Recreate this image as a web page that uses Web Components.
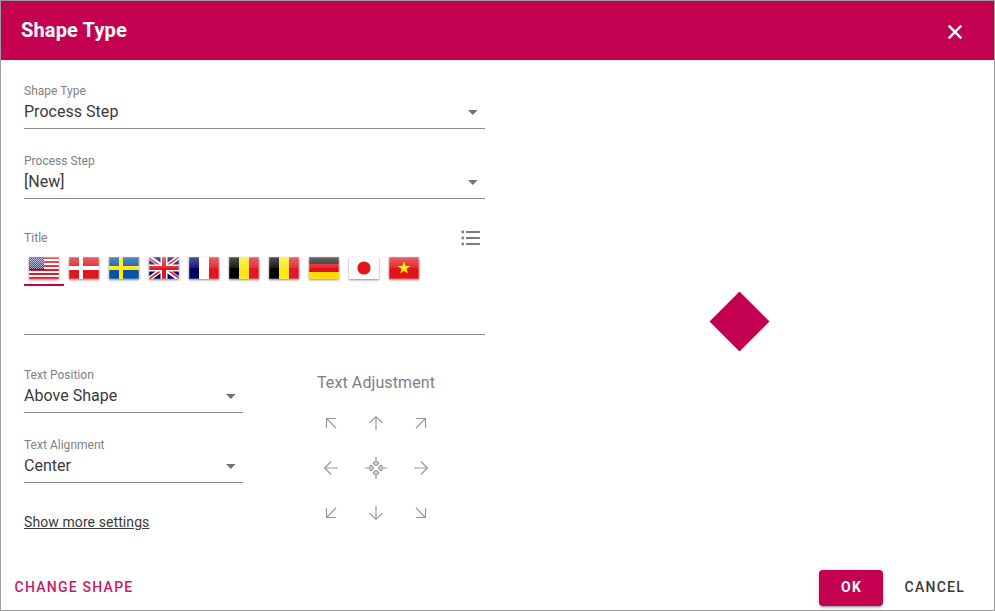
<!DOCTYPE html>
<html lang="en"><head><meta charset="utf-8"><title>Shape Type</title>
<style>
html,body{margin:0;height:100%;overflow:hidden;background:#fff;font-family:Roboto,sans-serif;--accent:#c40050}
</style></head><body>
<shape-dialog></shape-dialog>
<script>
const define=(name,html,setup)=>customElements.define(name,class extends HTMLElement{
  constructor(){super();this.attachShadow({mode:'open'})}
  connectedCallback(){this.shadowRoot.innerHTML=typeof html==='function'?html(this):html;if(setup)setup(this)}
});

define('select-field',`<style>
:host{display:flex;flex-direction:column;box-sizing:border-box;height:45px;border-bottom:1px solid #8c8c8c}
.label{font-size:12px;line-height:14px;color:#808080;letter-spacing:.02px}
.row{display:flex;justify-content:space-between;align-items:center;height:28px;font-size:16px;line-height:28px;color:#3a3a3a;letter-spacing:.03px}
svg{margin:0 7px 0 0}
</style><div class="label"><slot name="label"></slot></div>
<div class="row"><span><slot></slot></span><svg width="10" height="5"><path d="M0 0H9.6L4.8 5Z" fill="#737373"/></svg></div>`);

const flagArt={
us:'<path fill="#fff" d="M0 0h30v22H0z"/><path stroke="#e0162b" stroke-width="2" d="M0 1h30M0 5h30M0 9h30M0 13h30M0 17h30M0 21h30"/><path fill="#1c2a85" d="M0 0h15v13H0z"/><path d="M1 1.5h14M1 3.5h14M1 5.5h14M1 7.5h14M1 9.5h14M1 11.5h14M2 2.5h13M2 4.5h13M2 6.5h13M2 8.5h13M2 10.5h13" stroke="#fff" stroke-opacity=".6" stroke-dasharray="1 1"/>',
dk:'<path fill="#dc1820" d="M0 0h30v22H0z"/><path stroke="#fff" stroke-width="4" d="M0 11h30M12 0v22"/>',
se:'<path fill="#0852a5" d="M0 0h30v22H0z"/><path stroke="#ffec00" stroke-width="4" d="M0 11h30M12 0v22"/>',
gb:'<path fill="#000068" d="M0 0h30v22H0z"/><path stroke="#fff" stroke-width="4.6" d="M0 0l30 22M30 0L0 22"/><path stroke="#de1822" stroke-width="1.6" d="M0 1l14 10M30 21L16 11M30 0L16 10M0 22l14-10"/><path stroke="#fff" stroke-width="7" d="M15 0v22M0 11h30"/><path stroke="#de1822" stroke-width="4" d="M15 0v22M0 11h30"/>',
fr:'<path fill="#000068" d="M0 0h10v22H0z"/><path fill="#fff" d="M10 0h10v22H10z"/><path fill="#de1822" d="M20 0h10v22H20z"/>',
be:'<path fill="#000" d="M0 0h10v22H0z"/><path fill="#fbe816" d="M10 0h10v22H10z"/><path fill="#e01825" d="M20 0h10v22H20z"/>',
de:'<path fill="#222" d="M0 0h30v7H0z"/><path fill="#de1018" d="M0 7h30v8H0z"/><path fill="#ffda00" d="M0 15h30v7H0z"/>',
jp:'<path fill="#fff" d="M0 0h30v22H0z"/><circle cx="15" cy="11" r="6.6" fill="#e01520"/>',
vn:'<path fill="#df151b" d="M0 0h30v22H0z"/><path fill="#ffec00" d="M15 4.6l1.6 4.4 4.7.1-3.8 2.8 1.4 4.6-3.9-2.8-3.9 2.8 1.4-4.6L8.7 9.1l4.7-.1z"/>'};
define('flag-tab',el=>{const c=el.getAttribute('code');return `<style>
:host{display:flex;flex:none;box-sizing:border-box;width:40px;height:36px;padding:7px 5px 5px;border-bottom:2px solid transparent}
:host([selected]){border-color:var(--accent)}
svg{display:block;overflow:visible;filter:drop-shadow(0 1px 1px #0007)}
</style><svg width="30" height="22" viewBox="0 0 30 22"><defs>
<linearGradient id="g" x2="0" y2="1"><stop stop-color="#fff" stop-opacity="${c==='jp'?0:.32}"/><stop offset="1" stop-color="#fff" stop-opacity="${c==='jp'?0:.1}"/></linearGradient><clipPath id="c"><rect width="30" height="22" rx=".7"/></clipPath></defs>
<g clip-path="url(#c)">${flagArt[c]}<path fill="url(#g)" d="M0 0h30v11H0z"/><rect x=".5" y=".5" width="29" height="21" fill="none" stroke="#fff" stroke-opacity=".2"/></g></svg>`});

define('arrow-button',el=>{
 const d=el.getAttribute('dir');
 const arts={up:['M7 14V1M.5 7.2L7 .7l6.5 6.5',0],right:['M7 14V1M.5 7.2L7 .7l6.5 6.5',90],down:['M7 14V1M.5 7.2L7 .7l6.5 6.5',180],left:['M7 14V1M.5 7.2L7 .7l6.5 6.5',270],
 nw:['M2.5 12V2.5H12M2.5 2.5L12 12',0],ne:['M2.5 12V2.5H12M2.5 2.5L12 12',90],se:['M2.5 12V2.5H12M2.5 2.5L12 12',180],sw:['M2.5 12V2.5H12M2.5 2.5L12 12',270]};
 const art=d==='center'?`<svg width="22" height="22" viewBox="-11 -11 22 22" stroke-linejoin="round">${[0,90,180,270].map(a=>`<path transform="rotate(${a})" fill="#ddd" d="M0-11V-6.1M-2.4-5.7Q0-6.7 2.4-5.7L2.7-4.8L.6-2.7H-.6L-2.7-4.8Z"/>`).join('')}</svg>`
 :`<svg width="14" height="14" viewBox="0 0 14 14"><path transform="rotate(${arts[d][1]} 7 7)" d="${arts[d][0]}"/></svg>`;
 return `<style>:host{display:flex;align-items:center;justify-content:center;width:45px;height:45px}svg{fill:none;stroke:#999;stroke-width:1.2}</style>${art}`});

define('text-adjustment',`<style>:host{display:block;width:135px}
.title{font-size:16px;line-height:20px;height:27px;color:#808080;letter-spacing:.1px;padding-left:1px;text-align:center;white-space:nowrap}
.grid{display:grid;grid-template-columns:repeat(3,45px)}</style>
<div class="title">Text Adjustment</div><div class="grid">${['nw','up','ne','left','center','right','sw','down','se'].map(d=>`<arrow-button dir="${d}"></arrow-button>`).join('')}</div>`);

define('title-field',`<style>:host{display:block;border-bottom:1px solid #8c8c8c;height:108px}
.head{display:flex;height:24px;align-items:center;justify-content:space-between;font-size:12px;color:#808080;letter-spacing:.05px}
.head svg{margin-right:4px}.tabs{display:flex}</style>
<div class="head"><span>Title</span><svg width="20" height="16" viewBox="0 0 20 16" fill="#7c7c7c"><path d="M5 1H18.9V3H5zM5 7H18.9V9H5zM5 13H18.9V15H5z"/><circle cx="1.8" cy="2" r="1.4"/><circle cx="1.8" cy="8" r="1.4"/><circle cx="1.8" cy="14" r="1.4"/></svg></div>
<div class="tabs">${['us','dk','se','gb','fr','be','be','de','jp','vn'].map((c,i)=>`<flag-tab code="${c}"${i?'':' selected'}></flag-tab>`).join('')}</div>`);

define('dialog-button',`<style>:host{display:flex;align-items:center;justify-content:center;box-sizing:border-box;height:36px;padding-bottom:2px;border-radius:4px;font-size:14px;font-weight:500;letter-spacing:1.25px;color:#3a3a3a;white-space:nowrap}
:host([kind=link]){color:#cb1a62}
:host([kind=primary]){width:64px;padding-left:2px;background:var(--accent);color:#fff;font-weight:700;letter-spacing:1.2px;box-shadow:0 3px 1px -2px #0003,0 2px 2px #0002,0 1px 5px #0002}
</style><slot></slot>`);

define('dialog-header',`<style>:host{display:flex;align-items:center;justify-content:space-between;box-sizing:border-box;height:59px;padding:0 31px 0 20px;background:var(--accent);color:#fff}
h1{margin:0 0 2px;font-size:20px;line-height:24px;font-weight:700;letter-spacing:.15px}svg{margin-top:2px}</style>
<h1><slot></slot></h1><svg width="16" height="16"><path d="M1.7 1.7L14.3 14.3M14.3 1.7L1.7 14.3" stroke="#fff" stroke-width="2.4"/></svg>`);

define('shape-preview',`<style>:host{display:flex;justify-content:center;flex:1}svg{margin-top:207px;overflow:visible}</style><svg width="60" height="61"><path d="M29.5 .5L59.5 30.5L29.5 60.5L-.5 30.5Z" fill="var(--accent)"/></svg>`);

define('shape-dialog',`<style>
:host{display:flex;flex-direction:column;box-sizing:border-box;width:995px;height:611px;border:1px solid #9c9c9c}
main{display:flex;height:502px;box-sizing:border-box;padding:24px 0 0 23px}
.form{display:flex;flex-direction:column;width:461px}
.form>select-field{margin-bottom:25px}
title-field{margin-top:2px}
.split{display:flex;margin-top:33px;gap:65px}
.left{width:219px;display:flex;flex-direction:column;gap:25px}
text-adjustment{margin-top:5px}
.more{font-size:14px;line-height:20px;color:#3a3a3a;text-decoration:underline;letter-spacing:.09px;margin-top:4px}
footer{display:flex;align-items:center;height:36px;padding:0 29px 0 13.5px;margin-top:8px}
.primary{margin-left:auto;margin-right:22px}
</style>
<dialog-header>Shape Type</dialog-header>
<main><div class="form">
<select-field><span slot="label">Shape Type</span>Process Step</select-field>
<select-field><span slot="label">Process Step</span>[New]</select-field>
<title-field></title-field>
<div class="split"><div class="left">
<select-field><span slot="label">Text Position</span>Above Shape</select-field>
<select-field><span slot="label">Text Alignment</span>Center</select-field>
<span class="more">Show more settings</span></div>
<text-adjustment></text-adjustment></div></div>
<shape-preview></shape-preview></main>
<footer><dialog-button kind="link">CHANGE SHAPE</dialog-button><dialog-button class="primary" kind="primary">OK</dialog-button><dialog-button>CANCEL</dialog-button></footer>`);
</script></body></html>
